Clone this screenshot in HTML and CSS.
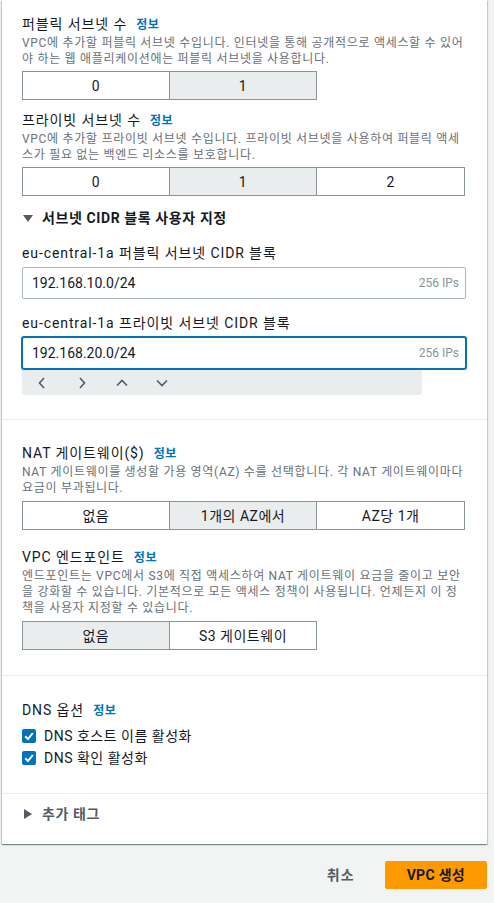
FILE: index.html
```html
<!DOCTYPE html>
<html lang="ko">
<head>
<meta charset="utf-8">
<title>VPC 생성</title>
<link rel="stylesheet" href="styles.css">
</head>
<body>
<div class="card">
  <section class="sec sec-first">
    <div class="field">
      <div class="label">퍼블릭 서브넷 수<span class="info">정보</span></div>
      <p class="desc">VPC에 추가할 퍼블릭 서브넷 수입니다. 인터넷을 통해 공개적으로 액세스할 수 있어야 하는 웹 애플리케이션에는 퍼블릭 서브넷을 사용합니다.</p>
      <div class="seg">
        <div class="seg-btn">0</div>
        <div class="seg-btn on">1</div>
      </div>
    </div>
    <div class="field field-next">
      <div class="label">프라이빗 서브넷 수<span class="info">정보</span></div>
      <p class="desc">VPC에 추가할 프라이빗 서브넷 수입니다. 프라이빗 서브넷을 사용하여 퍼블릭 액세스가 필요 없는 백엔드 리소스를 보호합니다.</p>
      <div class="seg">
        <div class="seg-btn">0</div>
        <div class="seg-btn on">1</div>
        <div class="seg-btn">2</div>
      </div>
    </div>
    <div class="exp exp-open">
      <svg class="tri" width="10" height="7" viewBox="0 0 10 7"><polygon points="0,0 10,0 5,7" fill="#545b64"/></svg>
      <span>서브넷 CIDR 블록 사용자 지정</span>
    </div>
    <div class="cidr">
      <div class="label">eu-central-1a 퍼블릭 서브넷 CIDR 블록</div>
      <div class="input"><span class="val">192.168.10.0/24</span><span class="ips">256 IPs</span></div>
    </div>
    <div class="cidr cidr-next">
      <div class="label">eu-central-1a 프라이빗 서브넷 CIDR 블록</div>
      <div class="input focus"><span class="val">192.168.20.0/24</span><span class="ips">256 IPs</span></div>
      <div class="bar">
        <span class="bar-i"><svg width="8" height="12" viewBox="0 0 8 12"><polyline points="6,1 1.5,6 6,11" fill="none" stroke="#545b64" stroke-width="1.6"/></svg></span>
        <span class="bar-i"><svg width="8" height="12" viewBox="0 0 8 12"><polyline points="2,1 6.5,6 2,11" fill="none" stroke="#545b64" stroke-width="1.6"/></svg></span>
        <span class="bar-i"><svg width="12" height="8" viewBox="0 0 12 8"><polyline points="1,6.5 6,1.5 11,6.5" fill="none" stroke="#545b64" stroke-width="1.6"/></svg></span>
        <span class="bar-i"><svg width="12" height="8" viewBox="0 0 12 8"><polyline points="1,1.5 6,6.5 11,1.5" fill="none" stroke="#545b64" stroke-width="1.6"/></svg></span>
      </div>
    </div>
  </section>

  <section class="sec sec-nat">
    <div class="field">
      <div class="label">NAT 게이트웨이($)<span class="info">정보</span></div>
      <p class="desc">NAT 게이트웨이를 생성할 가용 영역(AZ) 수를 선택합니다. 각 NAT 게이트웨이마다 요금이 부과됩니다.</p>
      <div class="seg">
        <div class="seg-btn">없음</div>
        <div class="seg-btn on">1개의 AZ에서</div>
        <div class="seg-btn">AZ당 1개</div>
      </div>
    </div>
    <div class="field field-ep">
      <div class="label">VPC 엔드포인트<span class="info">정보</span></div>
      <p class="desc">엔드포인트는 VPC에서 S3에 직접 액세스하여 NAT 게이트웨이 요금을 줄이고 보안을 강화할 수 있습니다. 기본적으로 모든 액세스 정책이 사용됩니다. 언제든지 이 정책을 사용자 지정할 수 있습니다.</p>
      <div class="seg">
        <div class="seg-btn on">없음</div>
        <div class="seg-btn">S3 게이트웨이</div>
      </div>
    </div>
  </section>

  <section class="sec sec-dns">
    <div class="label">DNS 옵션<span class="info">정보</span></div>
    <div class="cb-row cb-first">
      <span class="cb"><svg width="14" height="14" viewBox="0 0 14 14"><polyline points="3.2,7.2 6,10 10.8,4" fill="none" stroke="#fff" stroke-width="2"/></svg></span>
      <span>DNS 호스트 이름 활성화</span>
    </div>
    <div class="cb-row">
      <span class="cb"><svg width="14" height="14" viewBox="0 0 14 14"><polyline points="3.2,7.2 6,10 10.8,4" fill="none" stroke="#fff" stroke-width="2"/></svg></span>
      <span>DNS 확인 활성화</span>
    </div>
  </section>

  <section class="sec sec-tags">
    <div class="exp exp-closed">
      <svg class="tri2" width="8" height="10" viewBox="0 0 8 10"><polygon points="0,0 8,5 0,10" fill="#545b64"/></svg>
      <span>추가 태그</span>
    </div>
  </section>
</div>

<div class="footer">
  <span class="cancel">취소</span>
  <span class="primary">VPC 생성</span>
</div>
</body>
</html>
```

FILE: styles.css
```css
* { box-sizing: border-box; }

html, body { margin: 0; padding: 0; }

body {
  background: #f2f3f3;
  font-family: Roboto, "Noto Sans CJK KR", sans-serif;
  color: #16191f;
  font-size: 14px;
  line-height: 20px;
  width: 494px;
  height: 903px;
  overflow: hidden;
}

.card {
  margin: 0 7px 0 2px;
  background: #fff;
  box-shadow: 0 1px 1px 0 rgba(0, 28, 36, .3), 1px 1px 1px 0 rgba(0, 28, 36, .15), -1px 1px 1px 0 rgba(0, 28, 36, .15);
}

.sec {
  padding: 24px 21px 24px 20px;
  border-bottom: 1px solid #eaeded;
}

.sec-first { padding-top: 14px; }
.sec-nat { padding-top: 23px; padding-bottom: 25px; }
.sec-tags { padding: 10px 21px 20px 20px; border-bottom: none; }

.label {
  height: 20px;
  font-size: 14px;
  line-height: 20px;
  letter-spacing: 0.9px;
  color: #16191f;
  white-space: nowrap;
}

.info {
  margin-left: 9px;
  font-size: 12px;
  line-height: 12px;
  letter-spacing: 0.5px;
  font-weight: 700;
  color: #0073bb;
}

.desc {
  margin: 1px 0 0;
  font-size: 12px;
  line-height: 16px;
  letter-spacing: 0.7px;
  color: #687078;
}

.field-next { margin-top: 10px; }
.field-ep { margin-top: 17px; }

.seg {
  display: grid;
  grid-template-columns: repeat(3, 1fr);
  width: 443px;
  margin-top: 4px;
}

.sec-nat .seg { margin-top: 5px; }

.seg-btn {
  height: 29px;
  border: 1px solid #879596;
  display: flex;
  align-items: center;
  justify-content: center;
  font-size: 14px;
  letter-spacing: 0.5px;
  color: #16191f;
  background: #fff;
}

.seg-btn + .seg-btn { border-left: none; }

.seg-btn.on { background: #eaeded; }

.exp {
  display: flex;
  align-items: center;
  height: 20px;
  font-weight: 700;
  line-height: 20px;
  letter-spacing: 0.6px;
}

.exp-open { margin-top: 12px; }
.exp-open .tri { margin-left: 1px; margin-right: 9px; }

.exp-closed { color: #545b64; }
.exp-closed .tri2 { margin-left: 2px; margin-right: 10px; }

.cidr { margin-top: 15px; }
.cidr-next { margin-top: 14px; }

.input {
  display: flex;
  align-items: center;
  width: 444px;
  height: 32px;
  margin-top: 4px;
  padding: 0 6px 0 9px;
  border: 1px solid #aab7b8;
  border-radius: 2px;
  font-size: 14px;
  background: #fff;
}

.input.focus {
  border-color: #0073bb;
  box-shadow: 0 0 0 1px #0073bb;
}

.val { flex: 1; color: #16191f; }

.ips {
  font-size: 12px;
  color: #879596;
}

.bar {
  display: flex;
  width: 400px;
  height: 25px;
  margin-top: 1px;
  background: #eaeded;
  border-radius: 0 0 3px 3px;
}

.bar-i {
  width: 40px;
  display: flex;
  align-items: center;
  justify-content: center;
}

.cb-row {
  display: flex;
  align-items: center;
  height: 22px;
  gap: 8px;
  font-size: 14px;
  letter-spacing: 0.5px;
}

.cb-first { margin-top: 5px; }

.cb {
  width: 14px;
  height: 14px;
  background: #0073bb;
  border-radius: 2px;
  display: flex;
}

.footer {
  display: flex;
  justify-content: flex-end;
  align-items: center;
  margin: 17px 7px 0 0;
}

.cancel {
  font-weight: 700;
  color: #545b64;
  padding: 2px 20px;
  border: 2px solid transparent;
  line-height: 20px;
  letter-spacing: 1px;
  margin-right: 8px;
}

.primary {
  background: #ff9900;
  border: 2px solid #ff9900;
  border-radius: 2px;
  padding: 2px 20px;
  font-weight: 700;
  color: #16191f;
  line-height: 20px;
  letter-spacing: 0.3px;
}
```
